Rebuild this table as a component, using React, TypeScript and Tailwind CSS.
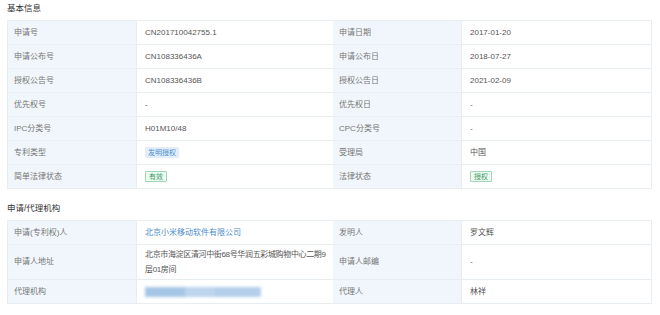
const font = { fontFamily: '"Liberation Sans", "Noto Sans CJK SC", sans-serif' };

type Cell = { label: string; value: React.ReactNode; tall?: boolean };

const Badge = ({ text, tone }: { text: string; tone: "blue" | "green" }) => (
  <span
    className={
      tone === "blue"
        ? "inline-block rounded-[1px] bg-[#e3eefa] px-[3px] text-[7px] leading-[11px] text-[#4d8fd1]"
        : "inline-block rounded-[1px] border border-[#9fd6b7] bg-[#effaf3] px-[3px] text-[7px] leading-[9px] text-[#3a9a65]"
    }
  >
    {text}
  </span>
);

const basic: [Cell, Cell][] = [
  [
    { label: "申请号", value: "CN201710042755.1" },
    { label: "申请日期", value: "2017-01-20" },
  ],
  [
    { label: "申请公布号", value: "CN108336436A" },
    { label: "申请公布日", value: "2018-07-27" },
  ],
  [
    { label: "授权公告号", value: "CN108336436B" },
    { label: "授权公告日", value: "2021-02-09" },
  ],
  [
    { label: "优先权号", value: "-" },
    { label: "优先权日", value: "-" },
  ],
  [
    { label: "IPC分类号", value: "H01M10/48" },
    { label: "CPC分类号", value: "-" },
  ],
  [
    { label: "专利类型", value: <Badge text="发明授权" tone="blue" /> },
    { label: "受理局", value: "中国" },
  ],
  [
    { label: "简单法律状态", value: <Badge text="有效" tone="green" /> },
    { label: "法律状态", value: <Badge text="授权" tone="green" /> },
  ],
];

const agency: [Cell, Cell][] = [
  [
    {
      label: "申请(专利权)人",
      value: <span className="text-[#4a8ccc]">北京小米移动软件有限公司</span>,
    },
    { label: "发明人", value: "罗文辉" },
  ],
  [
    {
      label: "申请人地址",
      value: (
        <span className="whitespace-nowrap leading-[15px] tracking-[-0.35px]">
          北京市海淀区清河中街68号华润五彩城购物中心二期9
          <br />
          层01房间
        </span>
      ),
      tall: true,
    },
    { label: "申请人邮编", value: "-" },
  ],
  [
    {
      label: "代理机构",
      value: (
        <span className="flex h-[10px] w-[116px] items-center gap-0 rounded-[2px] bg-[#b3cfea] blur-[1.5px]">
          <span className="h-full w-[40px] bg-[#a6c6e6]" />
          <span className="h-full w-[30px] bg-[#bdd5ee]" />
        </span>
      ),
    },
    { label: "代理人", value: "林祥" },
  ],
];

function InfoTable({ rows }: { rows: [Cell, Cell][] }) {
  return (
    <div className="ml-[7px] w-[645px] border border-[#e8edf2]">
      {rows.map((row, i) => {
        const h = row[0].tall ? "h-[34px]" : "h-[23px]";
        return (
          <div
            key={i}
            className={`grid grid-cols-[128px_197px_128px_1fr] ${
              i > 0 ? "border-t border-[#e8edf2]" : ""
            }`}
          >
            {row.map((cell, j) => (
              <div key={j} className="contents">
                <div
                  className={`${h} flex items-center bg-[#f0f6fb] pl-[6px] text-[#777]`}
                >
                  {cell.label}
                </div>
                <div
                  className={`${h} flex items-center border-l border-[#e8edf2] bg-white pl-[8px] text-[#555]`}
                >
                  {cell.value}
                </div>
              </div>
            ))}
          </div>
        );
      })}
    </div>
  );
}

export default function App() {
  return (
    <div
      className="h-[315px] w-[660px] overflow-hidden bg-white text-[8px]"
      style={font}
    >
      <div className="pl-[7px] pt-[1px] text-[8.5px] leading-[14px] text-[#333]">
        基本信息
      </div>
      <div className="mt-[5px]">
        <InfoTable rows={basic} />
      </div>
      <div className="mt-[12px] pl-[7px] text-[8.5px] leading-[14px] text-[#333]">
        申请/代理机构
      </div>
      <div className="mt-[5px]">
        <InfoTable rows={agency} />
      </div>
    </div>
  );
}
